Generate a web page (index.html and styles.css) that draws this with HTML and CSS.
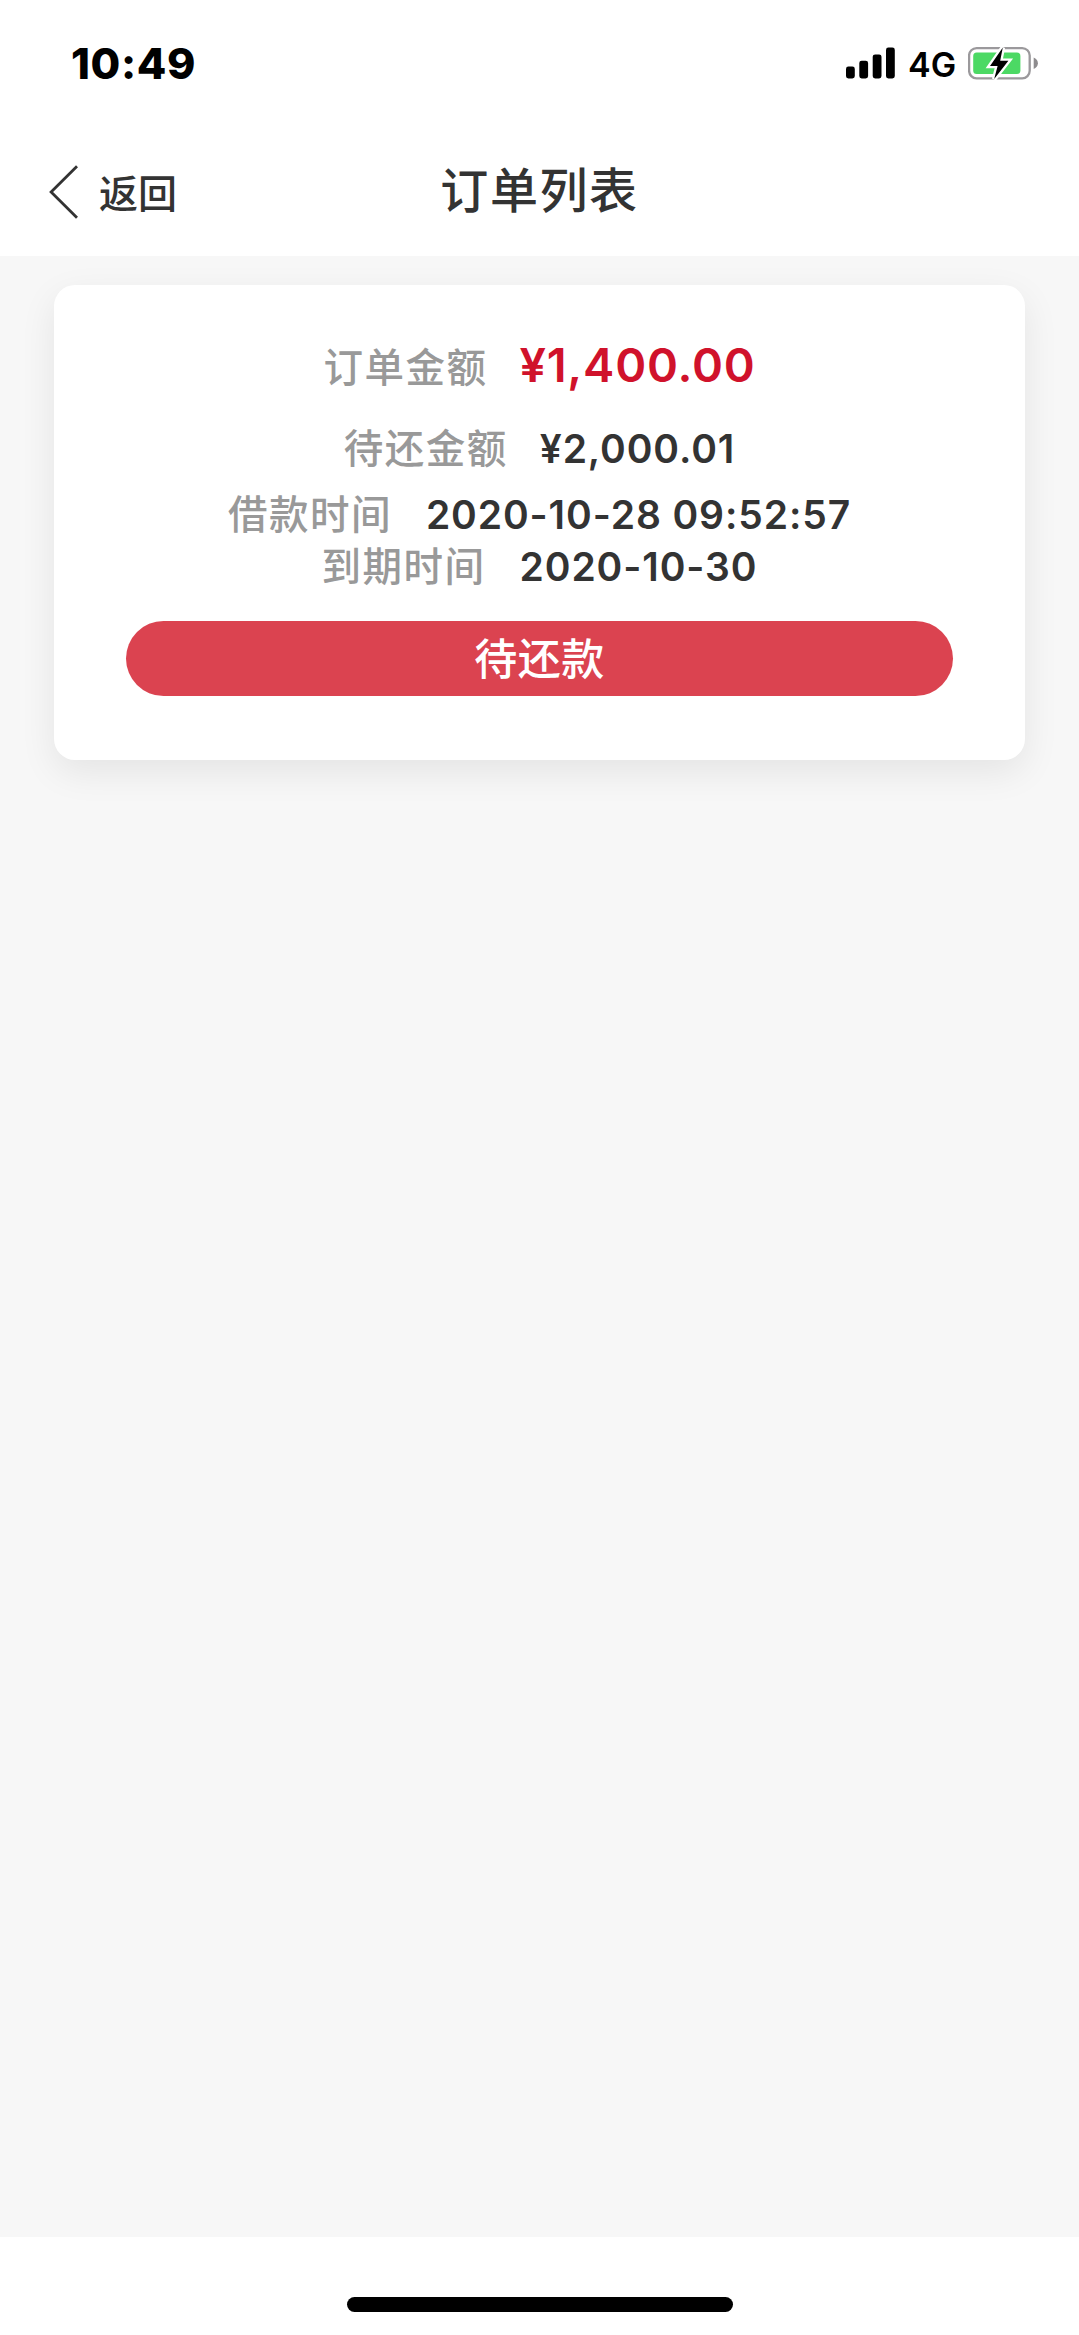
FILE: index.html
```html
<!DOCTYPE html>
<html lang="zh-CN">
<head>
<meta charset="utf-8">
<title>订单列表</title>
<link rel="stylesheet" href="styles.css">
</head>
<body>
<div class="screen">
  <div class="status">
    <span class="time">10:49</span>
    <div class="indicators">
      <svg class="signal" width="49" height="32" viewBox="0 0 49 32">
        <rect x="0" y="19.500" width="8.8" height="12" rx="2.4"/>
        <rect x="13.3" y="13.700" width="8.8" height="17.8" rx="2.4"/>
        <rect x="26.7" y="7.400" width="8.8" height="24.1" rx="2.4"/>
        <rect x="40" y="0.500" width="8.8" height="31" rx="2.4"/>
      </svg>
      <span class="network">4G</span>
      <svg class="battery" width="72" height="36" viewBox="0 0 72 36">
        <rect x="1.1" y="3.1" width="60.6" height="30.2" rx="7.5" fill="none" stroke="#9b999c" stroke-width="2.3"/>
        <path d="M65.7 12.6c2.4 1 4.2 3 4.2 5.7s-1.8 4.7-4.2 5.7z" fill="#8e8c8e"/>
        <rect x="5.2" y="7.5" width="47.2" height="21.5" rx="3.5" fill="#4cd964"/>
        <path d="M34.8 2.5L22 20.9h7.6L26.2 34 40.4 15.7h-8.2z" fill="#000" stroke="#fff" stroke-width="4.6" paint-order="stroke"/>
      </svg>
    </div>
  </div>
  <header class="nav">
    <div class="back">
      <svg width="30" height="54" viewBox="0 0 30 54" fill="none" stroke="#333" stroke-width="2.8">
        <path d="M28 1.3L2.1 27 28 52.7"/>
      </svg>
      <span class="back-text">返回</span>
    </div>
    <h1 class="title">订单列表</h1>
  </header>
  <main class="content">
    <section class="card">
      <div class="row row-total"><span class="label">订单金额</span><span class="value">¥1,400.00</span></div>
      <div class="row row-due"><span class="label">待还金额</span><span class="value">¥2,000.01</span></div>
      <div class="row row-start"><span class="label">借款时间</span><span class="value">2020-10-28 09:52:57</span></div>
      <div class="row row-end"><span class="label">到期时间</span><span class="value">2020-10-30</span></div>
      <button class="pay">待还款</button>
    </section>
  </main>
  <footer class="bottom"><div class="home-bar"></div></footer>
</div>
</body>
</html>
```
FILE: styles.css
```css
* { box-sizing: border-box; }
body {
  margin: 0;
  background: #fff;
  color: #333;
  font-family: Inter, "Noto Sans CJK SC", sans-serif;
}
.screen {
  width: 1079px;
  height: 2335px;
  display: flex;
  flex-direction: column;
}
.status {
  height: 128px;
  padding: 0 39px 0 71px;
  display: flex;
  justify-content: space-between;
  color: #000;
}
.time {
  margin-top: 38px;
  height: 50px;
  line-height: 50px;
  font-size: 43px;
  font-weight: 800;
  letter-spacing: 0.6px;
}
.indicators {
  height: 36px;
  margin-top: 45px;
  display: flex;
  align-items: center;
}
.signal { display: block; margin-right: 13px; }
.network {
  width: 47px;
  margin-right: 13px;
  padding-top: 3px;
  line-height: 38px;
  font-size: 34px;
  font-weight: 600;
  white-space: nowrap;
}
.battery { display: block; }
.nav {
  height: 128px;
  display: grid;
  grid-template-columns: 1fr auto 1fr;
}
.back {
  height: 128px;
  padding-left: 49px;
  display: flex;
  align-items: center;
}
.back-text {
  margin-left: 20px;
  padding-top: 3px;
  font-size: 39px;
  font-weight: 500;
  line-height: 56px;
}
.title {
  margin: 0;
  font-size: 48px;
  font-weight: 500;
  letter-spacing: 1.6px;
  line-height: 126px;
}
.content {
  flex: 1;
  padding: 29px 54px 0;
  background: #f7f7f7;
}
.card {
  height: 475px;
  padding: 44px 72px 0;
  display: flex;
  flex-direction: column;
  background: #fff;
  border-radius: 21px;
  box-shadow: 0 12px 36px rgba(0, 0, 0, 0.08);
}
.row {
  height: 52px;
  display: flex;
  justify-content: center;
  align-items: baseline;
  white-space: nowrap;
  line-height: 52px;
}
.row-total { height: 84px; line-height: 72px; }
.row-due { height: 76px; line-height: 72px; }
.label {
  margin-right: 34px;
  color: #999;
  font-size: 39.5px;
  font-weight: 500;
  letter-spacing: 1.5px;
}
.row-total .label,
.row-due .label { margin-right: 32px; }
.value {
  font-size: 39px;
  font-weight: 600;
  letter-spacing: 0.9px;
}
.row-total .value {
  color: #d0122b;
  font-size: 47px;
  letter-spacing: 0.8px;
}
.pay {
  height: 75px;
  margin-top: 28px;
  padding: 0;
  border: 0;
  border-radius: 38px;
  background: #db4350;
  color: #fff;
  font: inherit;
  font-size: 43px;
  font-weight: 500;
  letter-spacing: 0.5px;
  line-height: 72px;
}
.bottom {
  height: 98px;
  padding-top: 60px;
  display: flex;
  justify-content: center;
}
.home-bar {
  width: 386px;
  height: 15px;
  border-radius: 8px;
  background: #000;
}
```
